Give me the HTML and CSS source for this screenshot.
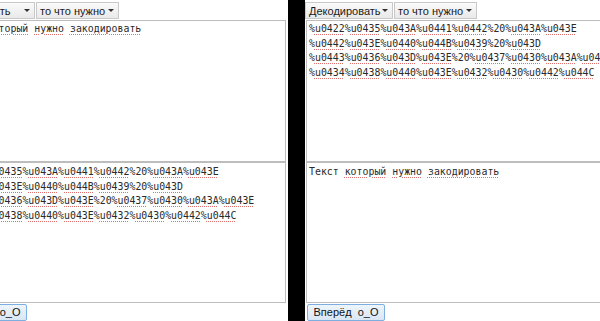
FILE: index.html
```html
<!DOCTYPE html>
<html lang="ru">
<head>
<meta charset="utf-8">
<title>Кодировщик</title>
<link rel="stylesheet" href="styles.css">
</head>
<body>
<div class="screen">
  <section class="panel">
    <div class="selects">
      <div class="select sel-mode"><span>Кодировать</span><i class="arrow"></i></div>
      <div class="select sel-what"><span>то что нужно</span><i class="arrow"></i></div>
    </div>
    <div class="area top">
      <div class="line">Текст <span class="sp">который</span> <span class="sp">нужно</span> <span class="sp">закодировать</span></div>
    </div>
    <div class="area bottom">
      <div class="line">%<span class="sp">u0422</span>%<span class="sp">u0435</span>%<span class="sp">u043A</span>%<span class="sp">u0441</span>%<span class="sp">u0442</span>%20%<span class="sp">u043A</span>%<span class="sp">u043E</span></div>
      <div class="line">%<span class="sp">u0442</span>%<span class="sp">u043E</span>%<span class="sp">u0440</span>%<span class="sp">u044B</span>%<span class="sp">u0439</span>%20%<span class="sp">u043D</span></div>
      <div class="line">%<span class="sp">u0443</span>%<span class="sp">u0436</span>%<span class="sp">u043D</span>%<span class="sp">u043E</span>%20%<span class="sp">u0437</span>%<span class="sp">u0430</span>%<span class="sp">u043A</span>%<span class="sp">u043E</span></div>
      <div class="line">%<span class="sp">u0434</span>%<span class="sp">u0438</span>%<span class="sp">u0440</span>%<span class="sp">u043E</span>%<span class="sp">u0432</span>%<span class="sp">u0430</span>%<span class="sp">u0442</span>%<span class="sp">u044C</span></div>
    </div>
    <button class="btn" type="button">Вперёд&nbsp; o_O</button>
  </section>
  <section class="panel">
    <div class="selects">
      <div class="select sel-mode"><span>Декодировать</span><i class="arrow"></i></div>
      <div class="select sel-what"><span>то что нужно</span><i class="arrow"></i></div>
    </div>
    <div class="area top">
      <div class="line">%<span class="sp">u0422</span>%<span class="sp">u0435</span>%<span class="sp">u043A</span>%<span class="sp">u0441</span>%<span class="sp">u0442</span>%20%<span class="sp">u043A</span>%<span class="sp">u043E</span></div>
      <div class="line">%<span class="sp">u0442</span>%<span class="sp">u043E</span>%<span class="sp">u0440</span>%<span class="sp">u044B</span>%<span class="sp">u0439</span>%20%<span class="sp">u043D</span></div>
      <div class="line">%<span class="sp">u0443</span>%<span class="sp">u0436</span>%<span class="sp">u043D</span>%<span class="sp">u043E</span>%20%<span class="sp">u0437</span>%<span class="sp">u0430</span>%<span class="sp">u043A</span>%<span class="sp">u043E</span></div>
      <div class="line">%<span class="sp">u0434</span>%<span class="sp">u0438</span>%<span class="sp">u0440</span>%<span class="sp">u043E</span>%<span class="sp">u0432</span>%<span class="sp">u0430</span>%<span class="sp">u0442</span>%<span class="sp">u044C</span></div>
    </div>
    <div class="area bottom">
      <div class="line">Текст <span class="sp">который</span> <span class="sp">нужно</span> <span class="sp">закодировать</span></div>
    </div>
    <button class="btn" type="button">Вперёд&nbsp; o_O</button>
  </section>
</div>
</body>
</html>
```

FILE: styles.css
```css
html, body {
  margin: 0;
  padding: 0;
  background: #000;
  height: 321px;
  overflow: hidden;
}

.screen {
  display: flex;
  gap: 17px;
  margin-left: -53px;
  height: 321px;
}

.panel {
  flex: none;
  width: 341px;
  height: 321px;
  background: #fff;
  padding-top: 2px;
  box-sizing: border-box;
  display: flex;
  flex-direction: column;
  align-items: flex-start;
}

.selects {
  display: flex;
  gap: 1px;
  height: 17px;
  margin-bottom: 1px;
}

.select {
  height: 17px;
  box-sizing: border-box;
  border: 1px solid #c9c9c9;
  background: linear-gradient(#fafafa, #e9e9e9);
  display: flex;
  align-items: center;
  justify-content: space-between;
  padding: 0 4px 0 3px;
  font-family: "Liberation Sans", Arial, sans-serif;
  font-size: 11px;
  color: #1a1a1a;
}

.sel-mode { width: 88px; }
.sel-what { width: 83px; }

.arrow {
  width: 0;
  height: 0;
  border-left: 3px solid transparent;
  border-right: 3px solid transparent;
  border-top: 3px solid #333;
}

.area {
  margin-left: 1px;
  width: 338px;
  box-sizing: border-box;
  border: 1px solid #bdbdbd;
  padding: 1px 2px;
  font-family: "DejaVu Sans Mono", monospace;
  font-size: 9.9px;
  line-height: 14.6px;
  color: #2a2a2a;
  white-space: nowrap;
  overflow: hidden;
}

.line {
  white-space: pre;
}

.top { height: 142px; }
.bottom { height: 141px; padding-top: 2px; }

.sp {
  text-decoration: underline dotted #e07070;
  text-underline-offset: 2px;
  text-decoration-thickness: 1px;
}

.btn {
  margin: 1px 0 0 2px;
  width: 78px;
  height: 17px;
  padding: 0;
  box-sizing: border-box;
  border: 1px solid #7eaee0;
  border-radius: 2px;
  background: linear-gradient(#eef5fc, #d9e6f3);
  font-family: "Liberation Sans", Arial, sans-serif;
  font-size: 11px;
  color: #111;
  line-height: 15px;
}
```
